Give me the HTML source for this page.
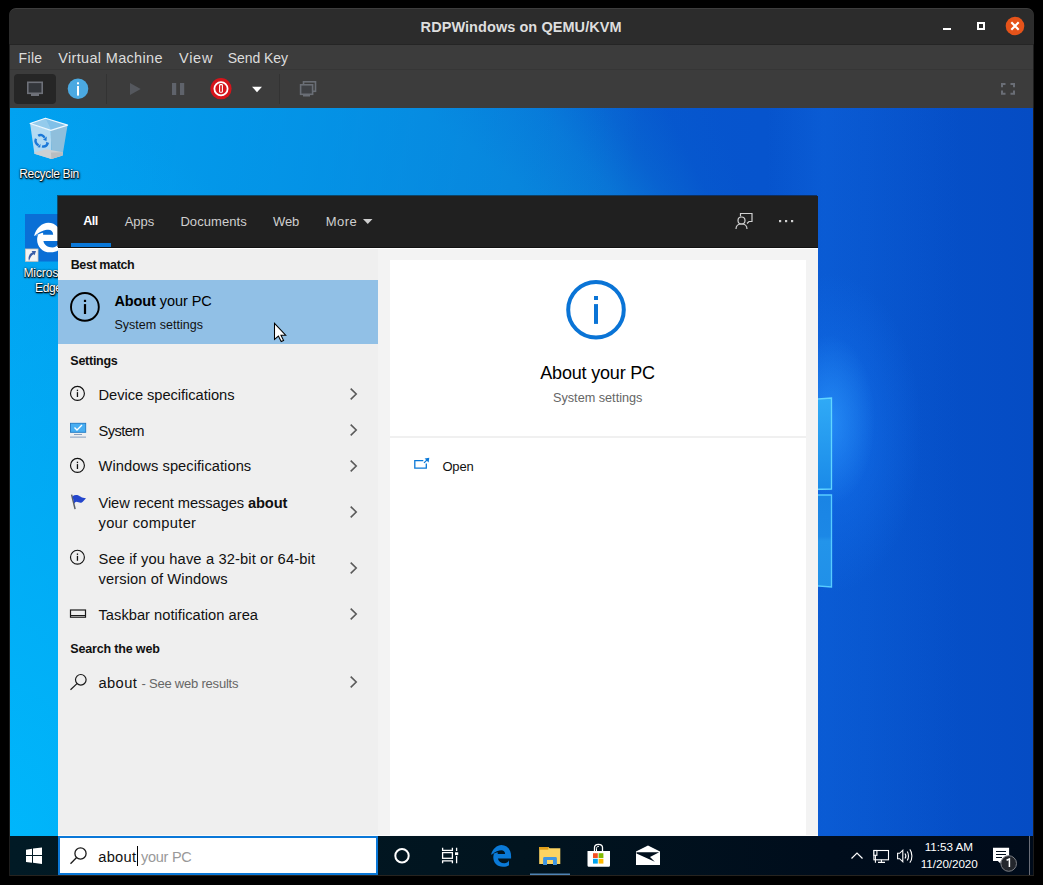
<!DOCTYPE html>
<html><head><meta charset="utf-8">
<style>
*{margin:0;padding:0;box-sizing:border-box}
html,body{width:1043px;height:885px;background:#000;overflow:hidden;font-family:"Liberation Sans",sans-serif;position:relative}
.a{position:absolute}
.t{position:absolute;white-space:nowrap;line-height:1}
svg{position:absolute;overflow:visible}
#win{position:absolute;left:9px;top:8px;width:1025px;height:868px;background:#1e1e1e;border-radius:7px 7px 0 0;overflow:hidden}
#title{position:absolute;left:0;top:0;width:1025px;height:36px;background:#2c2c2c;border-top:1px solid #3d3d3d;border-radius:7px 7px 0 0}
#menubar{position:absolute;left:1px;top:37px;width:1023px;height:24px;background:#3c3c3c}
#toolbar{position:absolute;left:1px;top:62px;width:1023px;height:38px;background:#3c3c3c}
#desk{position:absolute;left:10px;top:108px;width:1023px;height:728px;overflow:hidden;background:#0552c6}
#taskbar{position:absolute;left:10px;top:836px;width:1023px;height:39px;background:linear-gradient(90deg,#011a25 0%,#01141f 50%,#000d1c 80%,#000b1a 100%)}
#panel{position:absolute;left:58px;top:196px;width:760px;height:640px;background:#f3f3f3;z-index:5}
.ov{z-index:6}
.t{z-index:10}
#phead{position:absolute;left:0;top:0;width:760px;height:52px;background:#202020;box-shadow:-1px -1px 0 rgba(20,20,20,.6)}
#rpane{position:absolute;left:332px;top:64px;width:416px;height:575px;background:#fff}
</style></head><body>
<div id="win">
  <div id="title"></div>
  <div id="menubar"></div>
  <div id="toolbar"></div>
</div>
<!-- title buttons -->
<div class="a" style="left:943px;top:28px;width:8px;height:2px;background:#fff"></div>
<div class="a" style="left:977px;top:22px;width:8px;height:8px;border:2px solid #fff"></div>
<svg style="left:0;top:0" width="1043" height="60">
  <circle cx="1015" cy="26" r="9.3" fill="#e5531a"/>
  <path d="M1011.3 22.3L1018.7 29.7M1018.7 22.3L1011.3 29.7" stroke="#fff" stroke-width="2.1" stroke-linecap="butt"/>
</svg>
<!-- menubar/toolbar separators -->
<div class="a" style="left:10px;top:69px;width:1023px;height:1px;background:#363636"></div>
<div class="a" style="left:10px;top:44px;width:1023px;height:1px;background:#252525"></div>
<!-- toolbar -->
<div class="a" style="left:14px;top:74px;width:42px;height:30px;background:#262626;border-radius:4px"></div>
<div class="a" style="left:106px;top:74px;width:1px;height:30px;background:#333"></div>
<div class="a" style="left:279px;top:74px;width:1px;height:30px;background:#333"></div>
<svg style="left:0;top:60px" width="1043" height="48">
  <!-- monitor -->
  <rect x="27.8" y="22.3" width="14.4" height="11" fill="#33363b" stroke="#6e7179" stroke-width="1.6"/>
  <rect x="31" y="33.5" width="8" height="2.5" fill="#6e7179"/>
  <!-- info -->
  <circle cx="78" cy="28.7" r="10.3" fill="#4ba9e1"/>
  <rect x="77" y="22.3" width="2" height="2" fill="#fff"/>
  <rect x="77" y="26" width="2" height="9.6" fill="#fff"/>
  <!-- play -->
  <path d="M130 23L140.7 29L130 35Z" fill="#55585e"/>
  <!-- pause -->
  <rect x="172" y="23" width="4.2" height="12" fill="#5f636b"/>
  <rect x="180" y="23" width="4.2" height="12" fill="#5f636b"/>
  <!-- power -->
  <circle cx="221" cy="28.7" r="10.6" fill="#d5151b"/>
  <circle cx="221" cy="28.7" r="6.6" fill="none" stroke="#fff" stroke-width="1.8"/>
  <rect x="219.6" y="24.6" width="2.8" height="7.6" rx="0.8" fill="none" stroke="#fff" stroke-width="1.1"/>
  <!-- dropdown -->
  <path d="M252 26.8L262 26.8L257 32.2Z" fill="#fff"/>
  <!-- screens -->
  <rect x="303.5" y="21.8" width="12" height="9.5" fill="none" stroke="#6a6e76" stroke-width="1.6"/>
  <rect x="300.6" y="24.8" width="12" height="9.5" fill="#3f4145" stroke="#6a6e76" stroke-width="1.6"/>
  <rect x="303" y="34.5" width="7" height="2" fill="#6a6e76"/>
  <!-- fullscreen -->
  <path d="M1002 27.3V24H1005.5M1010.5 24H1014V27.3M1014 30.5V33.7H1010.5M1005.5 33.7H1002V30.5" fill="none" stroke="#6a6e76" stroke-width="2"/>
</svg>

<div id="desk">
  <div class="a" style="left:0;top:0;width:1023px;height:728px;background:
   radial-gradient(ellipse 45px 85px at 820px 312px,rgba(50,160,255,.55),rgba(50,160,255,0)),radial-gradient(ellipse 90px 160px at 822px 325px,rgba(25,125,250,.5),rgba(25,125,250,0)),
   radial-gradient(ellipse 420px 760px at 0px 740px,rgba(0,184,252,.95),rgba(0,184,252,0)),linear-gradient(100deg,rgba(0,164,242,.92) 0%,rgba(0,158,238,.6) 28%,rgba(0,150,232,0) 55%),
   conic-gradient(from 0deg at 808px 312px,rgba(10,128,218,0) 0deg,rgba(10,128,218,0) 205deg,#0a84da 235deg,#0a7fd8 308deg,rgba(10,120,214,.85) 318deg,rgba(10,110,210,.5) 326deg,rgba(8,100,205,.15) 334deg,rgba(8,100,205,0) 342deg),
   linear-gradient(90deg,rgba(20,110,230,0) 74%,rgba(20,110,230,.3) 79.5%,rgba(20,110,230,0) 93%),linear-gradient(90deg,#0758d2 0%,#0656cf 60%,#0653cc 80%,#054cc4 100%)"></div>
</div>
<!-- window logo panes partly visible -->
<svg style="left:0;top:0" width="1043" height="885">
  <defs>
    <linearGradient id="pg1" x1="0" y1="0" x2="0" y2="1"><stop offset="0" stop-color="#30aaf6"/><stop offset="1" stop-color="#1a8ae8"/></linearGradient>
    <linearGradient id="pg2" x1="0" y1="0" x2="0" y2="1"><stop offset="0" stop-color="#1a84e4"/><stop offset=".45" stop-color="#1c88e6"/><stop offset=".5" stop-color="#2394ea"/><stop offset="1" stop-color="#2090e8"/></linearGradient>
  </defs>
  <path d="M790 401L831.5 398L831.5 489L790 490Z" fill="url(#pg1)" stroke="#62d6ff" stroke-width="1.3"/>
  <path d="M790 495L831.5 495L831.5 587L790 584Z" fill="url(#pg2)" stroke="#58ccff" stroke-width="1.3"/>
</svg>

<!-- recycle bin -->
<svg style="left:0;top:0;z-index:1" width="100" height="300">
  <path d="M30.1 123.5L50.8 130.4L51.4 159.1L34.4 153.8Z" fill="#b2daf2"/>
  <path d="M50.8 130.4L67.6 125.1L62.5 155.4L51.4 159.1Z" fill="#8fbfdc"/>
  <path d="M30.1 123.5L45.5 118.2L67.6 125.1L50.8 130.4Z" fill="#80c0e8"/>
  <path d="M30.1 123.5L45.5 118.2L50 127.5L50.8 130.4Z" fill="#9dd0ee" opacity=".7"/>
  <path d="M34.4 152.4L46.6 149.3L62.8 152.3L62.5 155.4L51.4 159.1L34.4 153.8Z" fill="#cdd0d3"/>
  <path d="M51 152.5L62.8 152.3L62.5 155.4L51.4 159.1Z" fill="#b9bdc1"/>
  <path d="M30.1 123.5L45.5 118.2L67.6 125.1L50.8 130.4Z" fill="none" stroke="#eef8ff" stroke-width="1.2" stroke-linejoin="round"/>
  <g fill="none" stroke="#1a78d8" stroke-width="2.4">
    <path d="M38.2 135.8C40.5 134.2 43.2 135 44.6 137.8"/>
    <path d="M36 138.8C34.8 141.2 35.8 144 38.6 145.3"/>
    <path d="M42 146.3C44.5 147 46.8 145.8 47.6 143.3"/>
  </g>
  <g fill="#1a78d8">
    <path d="M43 139.8L46.8 136.6L46.5 141Z"/>
    <path d="M37.5 147.2L40.6 143.8L40.2 147.6Z"/>
    <path d="M45.8 141.8L49.2 143L47.3 145.6Z"/>
  </g>
  <!-- edge tile -->
  <rect x="25" y="214" width="40" height="47.5" fill="#0a6fd6"/>
  <g transform="translate(27.2 215.9) scale(1.36)"><path fill-rule="evenodd" d="M5.1 14.6C6.5 9 11 5 15.5 5C21 5 25.1 9.5 25.1 16V18.5H11.9C12.5 21.5 15 23.2 18.5 23.2C20.3 23.2 22 22.5 23 20.3V25.3C21 26.5 19 26.9 17 26.8C11 26.8 7.3 22.5 7.3 17.5C7.3 16 7.6 15 8 14C7 14.2 6 14.4 5.1 14.6Z M19.1 13.9C19 11.5 17.5 10.2 15.5 10.2C13 10.2 9 11.5 5.4 14.8C8.5 13.2 10.5 12.5 11.7 12.3V13.9Z" fill="#fff"/></g>
  <rect x="25.5" y="249" width="12.5" height="12.3" fill="#f4f4f4" stroke="#d8cbb8" stroke-width=".8"/>
  <path d="M29 261C27.8 257.5 29 253.8 32.5 252.6L31.6 251L36 251L34.6 255.3L33.6 254.2C31.4 255.2 30.2 257.8 29 261Z" fill="#3a5ea8"/>
</svg>

<div id="panel">
  <div id="phead"></div>
  <div class="a" style="left:0;top:51px;width:760px;height:1px;background:#121212"></div>
  <div class="a" style="left:0;top:52px;width:760px;height:1px;background:#fff"></div>
  <div class="a" style="left:0;top:53px;width:320px;height:586px;background:#efefef"></div>
  <div class="a" style="left:0;top:639px;width:760px;height:1px;background:#fbfbfb"></div>
  <div class="a" style="left:13px;top:47px;width:40px;height:4px;background:#0a78d8"></div>
  <div class="a" style="left:0;top:84px;width:320px;height:64px;background:#91c0e6"></div>
  <div id="rpane"></div>
  <div class="a" style="left:332px;top:240px;width:416px;height:2px;background:#f0f0f0"></div>
</div>

<svg class="ov" style="left:0;top:0" width="1043" height="885">
  <!-- More triangle -->
  <path d="M363 219L372.5 219L367.75 224Z" fill="#cfcfcf"/>
  <!-- feedback icon -->
  <g fill="none" stroke="#d0d0d0" stroke-width="1.2">
    <path d="M740.5 216.5V213.5H752V221.5H749L747 223.5"/>
    <circle cx="741.5" cy="220.5" r="3.5"/>
    <path d="M736 229C736 225 738.5 224 741.5 224C744.5 224 747 225 747 229"/>
  </g>
  <rect x="779" y="220" width="2.2" height="2.2" fill="#d0d0d0"/>
  <rect x="785" y="220" width="2.2" height="2.2" fill="#d0d0d0"/>
  <rect x="791" y="220" width="2.2" height="2.2" fill="#d0d0d0"/>
  <!-- best match icon -->
  <circle cx="84.9" cy="306.9" r="13.9" fill="none" stroke="#000" stroke-width="1.9"/>
  <rect x="83.9" y="299.8" width="2.2" height="2.2" fill="#000"/>
  <rect x="83.9" y="304.1" width="2.2" height="9.9" fill="#000"/>
  <!-- small info icons -->
  <g fill="none" stroke="#111" stroke-width="1.15">
    <circle cx="77.45" cy="393.4" r="6.95"/>
    <circle cx="77.45" cy="465.4" r="6.95"/>
    <circle cx="77.45" cy="557.2" r="6.95"/>
  </g>
  <g fill="#111">
    <rect x="76.8" y="389.7" width="1.3" height="1.4"/><rect x="76.8" y="392.1" width="1.3" height="4.9"/>
    <rect x="76.8" y="461.7" width="1.3" height="1.4"/><rect x="76.8" y="464.1" width="1.3" height="4.9"/>
    <rect x="76.8" y="553.5" width="1.3" height="1.4"/><rect x="76.8" y="555.9" width="1.3" height="4.9"/>
  </g>
  <!-- system monitor icon -->
  <rect x="70.5" y="423.3" width="15.2" height="9" fill="#48aef2" stroke="#1f78c4" stroke-width="0.9"/>
  <path d="M74.5 427.5L77 430L82 425" fill="none" stroke="#fff" stroke-width="1.4"/>
  <rect x="74" y="434" width="8" height="1" fill="#8aa0bd"/>
  <rect x="70" y="436.5" width="16" height="1.3" fill="#9fb2cb"/>
  <!-- flag -->
  <path d="M71.6 494.6L75.1 509.2" stroke="#5a5f66" stroke-width="1.5"/>
  <path d="M72.5 496.2C74.5 495 76.5 494.8 78.5 495.6C80 496.3 81.5 498 86 498.3C84.5 500 83 502 81.3 502.7C79.5 503.2 78 501.8 76.5 501.8C75.5 501.8 74.8 502.6 74.3 503.7Z" fill="#2446cc"/>
  <!-- taskbar icon -->
  <rect x="70.5" y="610" width="15" height="7.2" fill="none" stroke="#1a1a1a" stroke-width="1.2"/>
  <rect x="70.5" y="615" width="15" height="1" fill="#1a1a1a"/>
  <!-- search web icon -->
  <g fill="none" stroke="#1a1a1a" stroke-width="1.2">
    <circle cx="80.8" cy="679.8" r="5.3"/>
    <path d="M77 683.6L70.5 689.8"/>
  </g>
  <!-- chevrons -->
  <g fill="none" stroke="#5a5a5a" stroke-width="1.6">
    <path d="M350.7 388.6L356.2 394L350.7 399.4"/>
    <path d="M350.7 424.6L356.2 430L350.7 435.4"/>
    <path d="M350.7 460.6L356.2 466L350.7 471.4"/>
    <path d="M350.7 506.6L356.2 512L350.7 517.4"/>
    <path d="M350.7 562.6L356.2 568L350.7 573.4"/>
    <path d="M350.7 608.6L356.2 614L350.7 619.4"/>
    <path d="M350.7 676.6L356.2 682L350.7 687.4"/>
  </g>
  <!-- right pane big icon -->
  <circle cx="596" cy="309.8" r="27.8" fill="none" stroke="#0a74d6" stroke-width="4"/>
  <rect x="594" y="296" width="4" height="4" fill="#0a74d6"/>
  <rect x="594" y="304.1" width="4" height="19.8" fill="#0a74d6"/>
  <!-- open icon -->
  <path d="M423.3 460.6H414.8V468.1H426.3V463.6" fill="none" stroke="#0a78d8" stroke-width="1.3"/>
  <path d="M424 462.9L427.3 459.6" stroke="#0a78d8" stroke-width="1.3"/>
  <path d="M429.3 457.8L424.6 458.5L428.6 462.5Z" fill="#0a78d8"/>
  <!-- cursor -->
  <path d="M274.5 323.3L274.5 339.3L278.4 336L281.2 341.6L283.6 340.5L281 335.2L285.7 335.2Z" fill="#fff" stroke="#000" stroke-width="1.05" stroke-linejoin="miter"/>
</svg>

<div id="taskbar"></div>
<div class="a" style="left:1033px;top:108px;width:1px;height:768px;background:#1c1c1c"></div>
<div class="a" style="left:10px;top:875px;width:1024px;height:1px;background:#26231f"></div>
<!-- search box -->
<div class="a" style="left:58px;top:836px;width:320px;height:39px;background:#fff;border:2px solid #0a78d8"></div>
<div class="a" style="left:137px;top:846px;width:1px;height:20px;background:#000;z-index:11"></div>
<svg style="left:0;top:0" width="1043" height="885">
  <!-- windows logo -->
  <path d="M26 849.7L32 848.8V855H26Z M33 848.6L42 847.5V855H33Z M26 856H32V862.7L26 861.9Z M33 856H42V864L33 862.8Z" fill="#fff"/>
  <!-- search magnifier -->
  <g fill="none" stroke="#1a1a1a" stroke-width="1.3">
    <circle cx="80.5" cy="853.5" r="5.6"/>
    <path d="M76.6 857.5L70.5 863.8"/>
  </g>
  <!-- cortana -->
  <circle cx="402" cy="855.7" r="6.7" fill="none" stroke="#fff" stroke-width="2"/>
  <!-- task view -->
  <g stroke="#fff" stroke-width="1.3" fill="none">
    <path d="M442.6 847.8V850.3H452.4V847.8"/>
    <rect x="442.6" y="852.6" width="9.8" height="5.7"/>
    <path d="M442.6 863.2V860.8H452.4V863.2"/>
    <path d="M456.6 847.8V851M456.6 856V863.2"/>
  </g>
  <rect x="455" y="852.3" width="3.2" height="2.8" fill="#fff"/>
  <!-- edge -->
  <g transform="translate(486 840)"><path fill-rule="evenodd" d="M5.1 14.6C6.5 9 11 5 15.5 5C21 5 25.1 9.5 25.1 16V18.5H11.9C12.5 21.5 15 23.2 18.5 23.2C20.3 23.2 22 22.5 23 20.3V25.3C21 26.5 19 26.9 17 26.8C11 26.8 7.3 22.5 7.3 17.5C7.3 16 7.6 15 8 14C7 14.2 6 14.4 5.1 14.6Z M19.1 13.9C19 11.5 17.5 10.2 15.5 10.2C13 10.2 9 11.5 5.4 14.8C8.5 13.2 10.5 12.5 11.7 12.3V13.9Z" fill="#0a7ad8"/></g>
  <!-- explorer folder -->
  <path d="M539.2 847H548.3L549.6 848.2H560.3V864.1H539.2Z" fill="#fcd462"/>
  <rect x="539.2" y="847" width="9.2" height="2.7" fill="#e2a01a"/>
  <path d="M543.1 865V858.4Q543.1 857 544.5 857H555.5Q556.9 857 556.9 858.4V865H553V859.9H547V865Z" fill="#3f96e2"/>
  <rect x="530" y="873.5" width="40" height="1.5" fill="#5084b4"/>
  <!-- store -->
  <path d="M587.5 851H610V865.2C610 866.2 609.3 866.8 608.3 866.8H589.2C588.2 866.8 587.5 866.2 587.5 865.2Z" fill="#fff"/>
  <path d="M594.5 851V847.5C594.5 845.5 596 844.3 598.5 844.3C601 844.3 602.5 845.5 602.5 847.5V851" fill="none" stroke="#fff" stroke-width="1.3"/>
  <path d="M596.5 851V848.5C596.5 847 597.5 846.3 599 846.3" fill="none" stroke="#fff" stroke-width="1"/>
  <rect x="593" y="853.2" width="4.8" height="4.8" fill="#f25022"/>
  <rect x="598.6" y="853.2" width="4.8" height="4.8" fill="#7fba00"/>
  <rect x="593" y="858.8" width="4.8" height="4.8" fill="#00a4ef"/>
  <rect x="598.6" y="858.8" width="4.8" height="4.8" fill="#ffb900"/>
  <!-- mail -->
  <path d="M636 851.5L648 845.5L660 851.5V865H636Z" fill="#fff"/>
  <path d="M636.5 852.2L659.2 852.2L650 857L654.8 861.8L636.5 853.4Z" fill="#010f1d"/>
  <!-- tray chevron -->
  <path d="M851.5 858.5L857 853L862.5 858.5" fill="none" stroke="#fff" stroke-width="1.2"/>
  <!-- network -->
  <g fill="none" stroke="#fff" stroke-width="1.1">
    <rect x="873.9" y="850.5" width="14.6" height="9.3"/>
    <rect x="873.9" y="850.5" width="3" height="4.8" fill="#010f1d"/>
    <path d="M875.4 855.3V862.8M881.4 859.8V862.4M878 862.4H885"/>
  </g>
  <!-- volume -->
  <g fill="none" stroke="#fff" stroke-width="1.1">
    <path d="M897.6 853.3H899.6L902.8 850.2V861.8L899.6 858.7H897.6Z"/>
    <path d="M905 853.5C905.9 854.8 905.9 857.2 905 858.5"/>
    <path d="M907.2 851.5C908.9 853.8 908.9 858.2 907.2 860.5"/>
    <path d="M909.8 849.3C912.6 852.6 912.6 859.4 909.8 862.7"/>
  </g>
  <!-- notification -->
  <path d="M993 847.8H1009.1V861H1000.8L1000.5 863.6L997.8 861H993Z" fill="#fff"/>
  <path d="M996 851.5H1006M996 854.5H1006M996 857.5H1002" stroke="#010f1d" stroke-width="1.1"/>
  <circle cx="1008.7" cy="863.5" r="7.8" fill="#23262c" stroke="#7c7f85" stroke-width="1"/>
  <path d="M1006.6 860.2L1009.4 858.9V867" fill="none" stroke="#fff" stroke-width="1.5"/>
  <rect x="1029" y="836" width="1" height="39" fill="#6a6e78"/>
</svg>
<div class="t" style="left:420.6px;top:19.73px;font-size:14.5px;font-weight:bold;color:#dedede;letter-spacing:0.065px;">RDPWindows on QEMU/KVM</div>
<div class="t" style="left:18.6px;top:51.15px;font-size:14px;font-weight:normal;color:#dcdcdc;letter-spacing:0.312px;">File</div>
<div class="t" style="left:58.3px;top:50.73px;font-size:14.5px;font-weight:normal;color:#dcdcdc;letter-spacing:0.322px;">Virtual Machine</div>
<div class="t" style="left:179.0px;top:50.73px;font-size:14.5px;font-weight:normal;color:#dcdcdc;letter-spacing:0.743px;">View</div>
<div class="t" style="left:227.8px;top:51.15px;font-size:14px;font-weight:normal;color:#dcdcdc;letter-spacing:-0.060px;">Send Key</div>
<div class="t" style="left:19.3px;top:168.24px;font-size:12px;font-weight:normal;color:#fff;letter-spacing:-0.346px;text-shadow:0 1px 1px #000,1px 1px 2px #000,0 0 2px rgba(0,0,0,.8);z-index:1">Recycle Bin</div>
<div class="t" style="left:23.4px;top:266.74px;font-size:12px;font-weight:normal;color:#fff;letter-spacing:-0.069px;text-shadow:0 1px 1px #000,1px 1px 2px #000,0 0 2px rgba(0,0,0,.8);z-index:1">Micros</div>
<div class="t" style="left:35.0px;top:282.14px;font-size:12px;font-weight:normal;color:#fff;letter-spacing:-0.344px;text-shadow:0 1px 1px #000,1px 1px 2px #000,0 0 2px rgba(0,0,0,.8);z-index:1">Edge</div>
<div class="t" style="left:83.3px;top:215.22px;font-size:12.5px;font-weight:bold;color:#fff;letter-spacing:-0.492px;">All</div>
<div class="t" style="left:124.7px;top:214.80px;font-size:13px;font-weight:normal;color:#cfcfcf;letter-spacing:-0.047px;">Apps</div>
<div class="t" style="left:180.4px;top:214.80px;font-size:13px;font-weight:normal;color:#cfcfcf;letter-spacing:0.069px;">Documents</div>
<div class="t" style="left:273.0px;top:214.80px;font-size:13px;font-weight:normal;color:#cfcfcf;letter-spacing:-0.150px;">Web</div>
<div class="t" style="left:325.8px;top:214.80px;font-size:13px;font-weight:normal;color:#cfcfcf;letter-spacing:0.425px;">More</div>
<div class="t" style="left:70.7px;top:259.22px;font-size:12.5px;font-weight:bold;color:#111;letter-spacing:-0.377px;">Best match</div>
<div class="t" style="left:114.4px;top:293.53px;font-size:14.5px;font-weight:normal;color:#000;letter-spacing:-0.083px;"><b>About</b> your PC</div>
<div class="t" style="left:114.4px;top:319.22px;font-size:12.5px;font-weight:normal;color:#111;letter-spacing:0.026px;">System settings</div>
<div class="t" style="left:70.3px;top:355.22px;font-size:12.5px;font-weight:bold;color:#111;letter-spacing:-0.259px;">Settings</div>
<div class="t" style="left:98.5px;top:387.76px;font-size:14.7px;font-weight:normal;color:#111;letter-spacing:-0.058px;">Device specifications</div>
<div class="t" style="left:98.5px;top:423.56px;font-size:14.7px;font-weight:normal;color:#111;letter-spacing:-0.594px;">System</div>
<div class="t" style="left:98.5px;top:458.96px;font-size:14.7px;font-weight:normal;color:#111;letter-spacing:0.041px;">Windows specifications</div>
<div class="t" style="left:98.5px;top:495.56px;font-size:14.7px;font-weight:normal;color:#111;letter-spacing:-0.102px;">View recent messages <b>about</b></div>
<div class="t" style="left:98.5px;top:515.56px;font-size:14.7px;font-weight:normal;color:#111;letter-spacing:0.301px;">your computer</div>
<div class="t" style="left:98.5px;top:551.96px;font-size:14.7px;font-weight:normal;color:#111;letter-spacing:0.128px;">See if you have a 32-bit or 64-bit</div>
<div class="t" style="left:98.5px;top:572.06px;font-size:14.7px;font-weight:normal;color:#111;letter-spacing:0.097px;">version of Windows</div>
<div class="t" style="left:98.5px;top:607.56px;font-size:14.7px;font-weight:normal;color:#111;letter-spacing:0.012px;">Taskbar notification area</div>
<div class="t" style="left:70.3px;top:643.22px;font-size:12.5px;font-weight:bold;color:#111;letter-spacing:-0.169px;">Search the web</div>
<div class="t" style="left:98.5px;top:675.56px;font-size:14.7px;font-weight:normal;color:#111;letter-spacing:0.384px;">about</div>
<div class="t" style="left:141.4px;top:677.00px;font-size:13px;font-weight:normal;color:#666;letter-spacing:-0.207px;">-&nbsp;See web results</div>
<div class="t" style="left:540.3px;top:364.26px;font-size:18px;font-weight:normal;color:#000;letter-spacing:-0.189px;">About your PC</div>
<div class="t" style="left:553.0px;top:391.95px;font-size:12.7px;font-weight:normal;color:#666;letter-spacing:-0.012px;">System settings</div>
<div class="t" style="left:442.4px;top:459.70px;font-size:13px;font-weight:normal;color:#111;letter-spacing:-0.171px;">Open</div>
<div class="t" style="left:98.2px;top:849.56px;font-size:14.7px;font-weight:normal;color:#111;letter-spacing:0.284px;">about</div>
<div class="t" style="left:141.0px;top:849.73px;font-size:14.5px;font-weight:normal;color:#999;letter-spacing:-0.265px;">your PC</div>
<div class="t" style="left:924.7px;top:840.90px;font-size:11.7px;font-weight:normal;color:#fff;letter-spacing:-0.031px;">11:53 AM</div>
<div class="t" style="left:920.8px;top:858.40px;font-size:11.7px;font-weight:normal;color:#fff;letter-spacing:-0.071px;">11/20/2020</div>
</body></html>
